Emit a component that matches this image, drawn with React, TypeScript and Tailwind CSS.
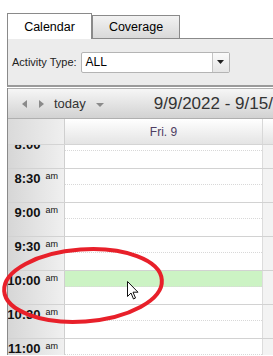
import React from "react";

const slots = ["8:00", "8:30", "9:00", "9:30", "10:00", "10:30", "11:00"];

export default function App() {
  return (
    <div
      className="relative w-[273px] h-[356px] overflow-hidden bg-white text-[#222]"
      style={{ fontFamily: '"Liberation Sans", Arial, sans-serif' }}
    >
      {/* tabs */}
      <div className="flex items-end pt-[13px] pl-[7px] h-[39px]">
        <div className="w-[85px] h-[26px] border border-b-0 border-[#8a8a8a] bg-white flex items-center justify-center text-[12.5px] text-black pt-[1px]">
          Calendar
        </div>
        <div className="w-[88px] h-[24px] border border-[#8a8a8a] bg-gradient-to-b from-[#f2f2f2] to-[#d9d9d9] flex items-center justify-center text-[12.5px] text-black">
          Coverage
        </div>
        <div className="flex-1 border-b border-[#8a8a8a]" />
      </div>

      {/* filter panel */}
      <div className="ml-[7px] border-l border-[#8a8a8a] bg-[#ececec] h-[48px] flex items-center pl-[4px] border-b-2 border-b-[#9a9a9a]">
        <span className="text-[11px] text-[#222] mr-[4px]">Activity Type:</span>
        <div className="flex w-[149px] h-[21px] border border-[#b4b4b4] rounded-[2px] bg-white">
          <div className="flex-1 flex items-center pl-[4px] text-[12px] text-black">ALL</div>
          <div className="w-[17px] border-l border-[#c4c4c4] bg-gradient-to-b from-[#fafafa] to-[#e6e6e6] flex items-center justify-center">
            <svg width="7" height="4" viewBox="0 0 7 4">
              <path d="M0 0h7L3.5 4z" fill="#222" />
            </svg>
          </div>
        </div>
      </div>

      {/* calendar */}
      <div className="ml-[7px] border-l border-[#8a8a8a] mt-[1px]">
        <div className="h-[31px] flex items-center bg-gradient-to-b from-[#f6f6f6] to-[#d2d2d2] border-t border-b border-[#b0b0b0] overflow-hidden">
          <svg className="ml-[14px] shrink-0" width="5" height="8" viewBox="0 0 5 8">
            <path d="M5 0v8L0 4z" fill="#8a8a8a" />
          </svg>
          <svg className="ml-[12px] shrink-0" width="5" height="8" viewBox="0 0 5 8">
            <path d="M0 0v8l5-4z" fill="#8a8a8a" />
          </svg>
          <span className="ml-[10px] shrink-0 text-[13px] text-[#333]">today</span>
          <svg className="ml-[10px] mt-[2px] shrink-0" width="8" height="4" viewBox="0 0 8 4">
            <path d="M0 0h8L4 4z" fill="#8a8a8a" />
          </svg>
          <span className="ml-[50px] shrink-0 text-[17px] text-[#333] whitespace-nowrap">9/9/2022 - 9/15/2022</span>
        </div>

        {/* header */}
        <div className="flex h-[26px] border-b border-[#d4d4d4]">
          <div className="w-[57px] shrink-0 bg-gradient-to-r from-[#dadada] to-[#efefef] border-r border-[#cfcfcf]" />
          <div className="w-[198px] shrink-0 bg-gradient-to-b from-[#ffffff] to-[#e4e4e4] border-r border-[#d8d8d8] flex items-center justify-center text-[12px] text-[#4e3d63]">
            Fri. 9
          </div>
          <div className="flex-1 bg-gradient-to-b from-[#ffffff] to-[#e4e4e4]" />
        </div>

        {/* body */}
        <div className="h-[210px] overflow-hidden">
          <div className="-mt-[11px]">
            {slots.map((t) => (
              <div key={t} className="flex h-[34px] border-t border-[#d2d2d2]">
                <div className="w-[57px] shrink-0 bg-gradient-to-r from-[#d6d6d6] to-[#f0f0f0] border-r border-[#cfcfcf] flex justify-end pr-[6px] pt-[2px]">
                  <span className="text-[13px] font-bold text-[#111] leading-[16px]">{t}</span>
                  <span className="text-[9px] text-[#111] ml-[5px] leading-[10px]">am</span>
                </div>
                <div className="w-[198px] shrink-0 border-r border-[#dcdcdc] flex flex-col">
                  <div className={`h-[16px] border-b border-dotted border-[#d8d8d8] ${t === "10:00" ? "bg-[#ccf3c4]" : ""}`} />
                  <div className="flex-1" />
                </div>
                <div className="flex-1 bg-[#f3f3f3]" />
              </div>
            ))}
          </div>
        </div>
      </div>

      {/* annotation */}
      <svg className="absolute inset-0 pointer-events-none" width="273" height="356" viewBox="0 0 273 356">
        <ellipse cx="83" cy="285.5" rx="79" ry="36" transform="rotate(-4 83 285.5)" fill="none" stroke="#e8202a" strokeWidth="4" />
        <path
          d="M127.5 281.5v15l3.5-3.5 2.5 6 2-1-2.5-5.8h5z"
          fill="#fff"
          stroke="#111"
          strokeWidth="1"
          strokeLinejoin="round"
        />
      </svg>
    </div>
  );
}
